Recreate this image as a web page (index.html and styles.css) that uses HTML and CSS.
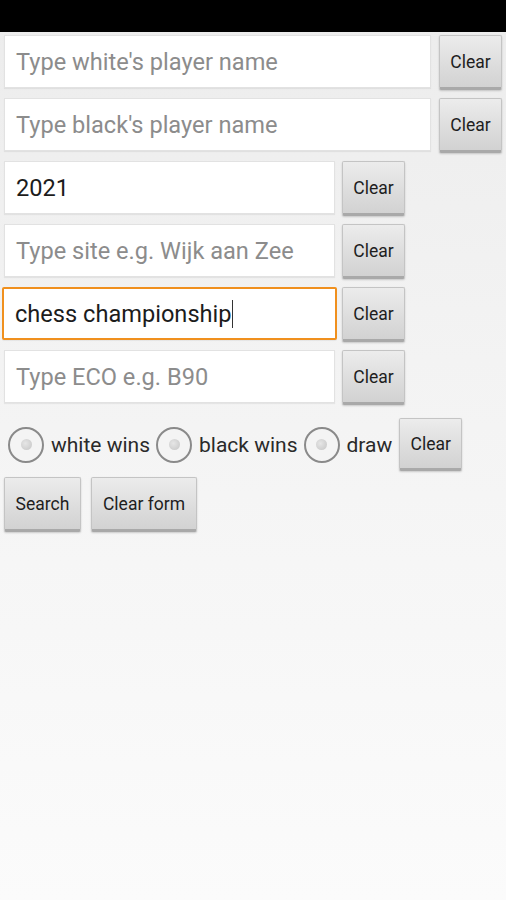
FILE: index.html
```html
<!DOCTYPE html>
<html>
<head>
<meta charset="utf-8">
<link rel="stylesheet" href="styles.css">
</head>
<body>
<div class="status"></div>
<div class="form">
  <div class="row">
    <div class="field wide"><span class="ph">Type white's player name</span></div>
    <div class="btn clear">Clear</div>
  </div>
  <div class="row">
    <div class="field wide"><span class="ph">Type black's player name</span></div>
    <div class="btn clear">Clear</div>
  </div>
  <div class="row">
    <div class="field"><span class="val">2021</span></div>
    <div class="btn clear">Clear</div>
  </div>
  <div class="row">
    <div class="field"><span class="ph">Type site e.g. Wijk aan Zee</span></div>
    <div class="btn clear">Clear</div>
  </div>
  <div class="row">
    <div class="field focus"><span class="val">chess championship</span><span class="caret"></span></div>
    <div class="btn clear">Clear</div>
  </div>
  <div class="row">
    <div class="field"><span class="ph">Type ECO e.g. B90</span></div>
    <div class="btn clear">Clear</div>
  </div>
  <div class="radios">
    <div class="radio"><span class="circle"><span class="dot"></span></span><span class="rlabel">white wins</span></div>
    <div class="radio"><span class="circle"><span class="dot"></span></span><span class="rlabel">black wins</span></div>
    <div class="radio"><span class="circle"><span class="dot"></span></span><span class="rlabel">draw</span></div>
    <div class="btn clear rclear">Clear</div>
  </div>
  <div class="actions">
    <div class="btn search">Search</div>
    <div class="btn clearform">Clear form</div>
  </div>
</div>
</body>
</html>
```
FILE: styles.css
```css
html, body {
  margin: 0;
  padding: 0;
}
body {
  width: 506px;
  height: 900px;
  background: linear-gradient(to bottom, #ececec 0%, #f3f3f3 40%, #fbfbfb 100%);
  font-family: Roboto, "Noto Sans", sans-serif;
  overflow: hidden;
}
.status {
  height: 32px;
  background: #000;
}
.form {
  padding: 3px 0 0 4px;
}
.row {
  display: flex;
  align-items: flex-start;
  height: 56px;
  margin-bottom: 7px;
}
.field {
  box-sizing: border-box;
  width: 331px;
  height: 53px;
  background: #fff;
  border: 1px solid #e2e2e2;
  box-shadow: 0 1px 1px rgba(0,0,0,0.06);
  display: flex;
  align-items: center;
  padding-left: 11px;
  font-size: 23.6px;
  margin-right: 7px;
}
.field.wide {
  width: 427px;
  margin-right: 8px;
}
.field.focus {
  border: 2px solid #f0901e;
  border-radius: 2px;
  width: 335px;
  margin-left: -2px;
  margin-right: 5px;
  padding-left: 11px;
  height: 53px;
}
.ph {
  color: #8c8c8c;
}
.val {
  color: #1c1c1c;
}
.caret {
  display: inline-block;
  width: 1px;
  height: 28px;
  background: #333;
  margin-left: 0;
}
.btn {
  box-sizing: border-box;
  height: 55px;
  background: linear-gradient(to bottom, #ececec 0%, #dcdcdc 60%, #d2d2d2 100%);
  border: 1px solid #c4c4c4;
  border-bottom: 3px solid #a9a9a9;
  border-radius: 2px;
  box-shadow: 0 1px 2px rgba(0,0,0,0.18);
  display: flex;
  align-items: center;
  justify-content: center;
  font-size: 17.5px;
  color: #1e1e1e;
}
.clear {
  width: 63px;
}
.radios {
  display: flex;
  align-items: center;
  height: 53px;
  margin-top: 12px;
  padding-left: 4px;
}
.radio {
  display: flex;
  align-items: center;
  margin-right: 6px;
}
.circle {
  box-sizing: border-box;
  width: 36px;
  height: 36px;
  border: 2px solid #8a8a8a;
  border-radius: 50%;
  display: flex;
  align-items: center;
  justify-content: center;
  margin-right: 7px;
  background: #f4f4f4;
}
.dot {
  width: 11px;
  height: 11px;
  border-radius: 50%;
  background: radial-gradient(circle at 40% 40%, #e6e6e6, #c4c4c4);
}
.rlabel {
  font-size: 21px;
  color: #2a2a2a;
}
.rclear {
  height: 53px;
  margin-left: 1px;
}
.actions {
  display: flex;
  gap: 10px;
  margin-top: 6px;
}
.search {
  width: 77px;
  height: 55px;
}
.clearform {
  width: 106px;
  height: 55px;
}
```
